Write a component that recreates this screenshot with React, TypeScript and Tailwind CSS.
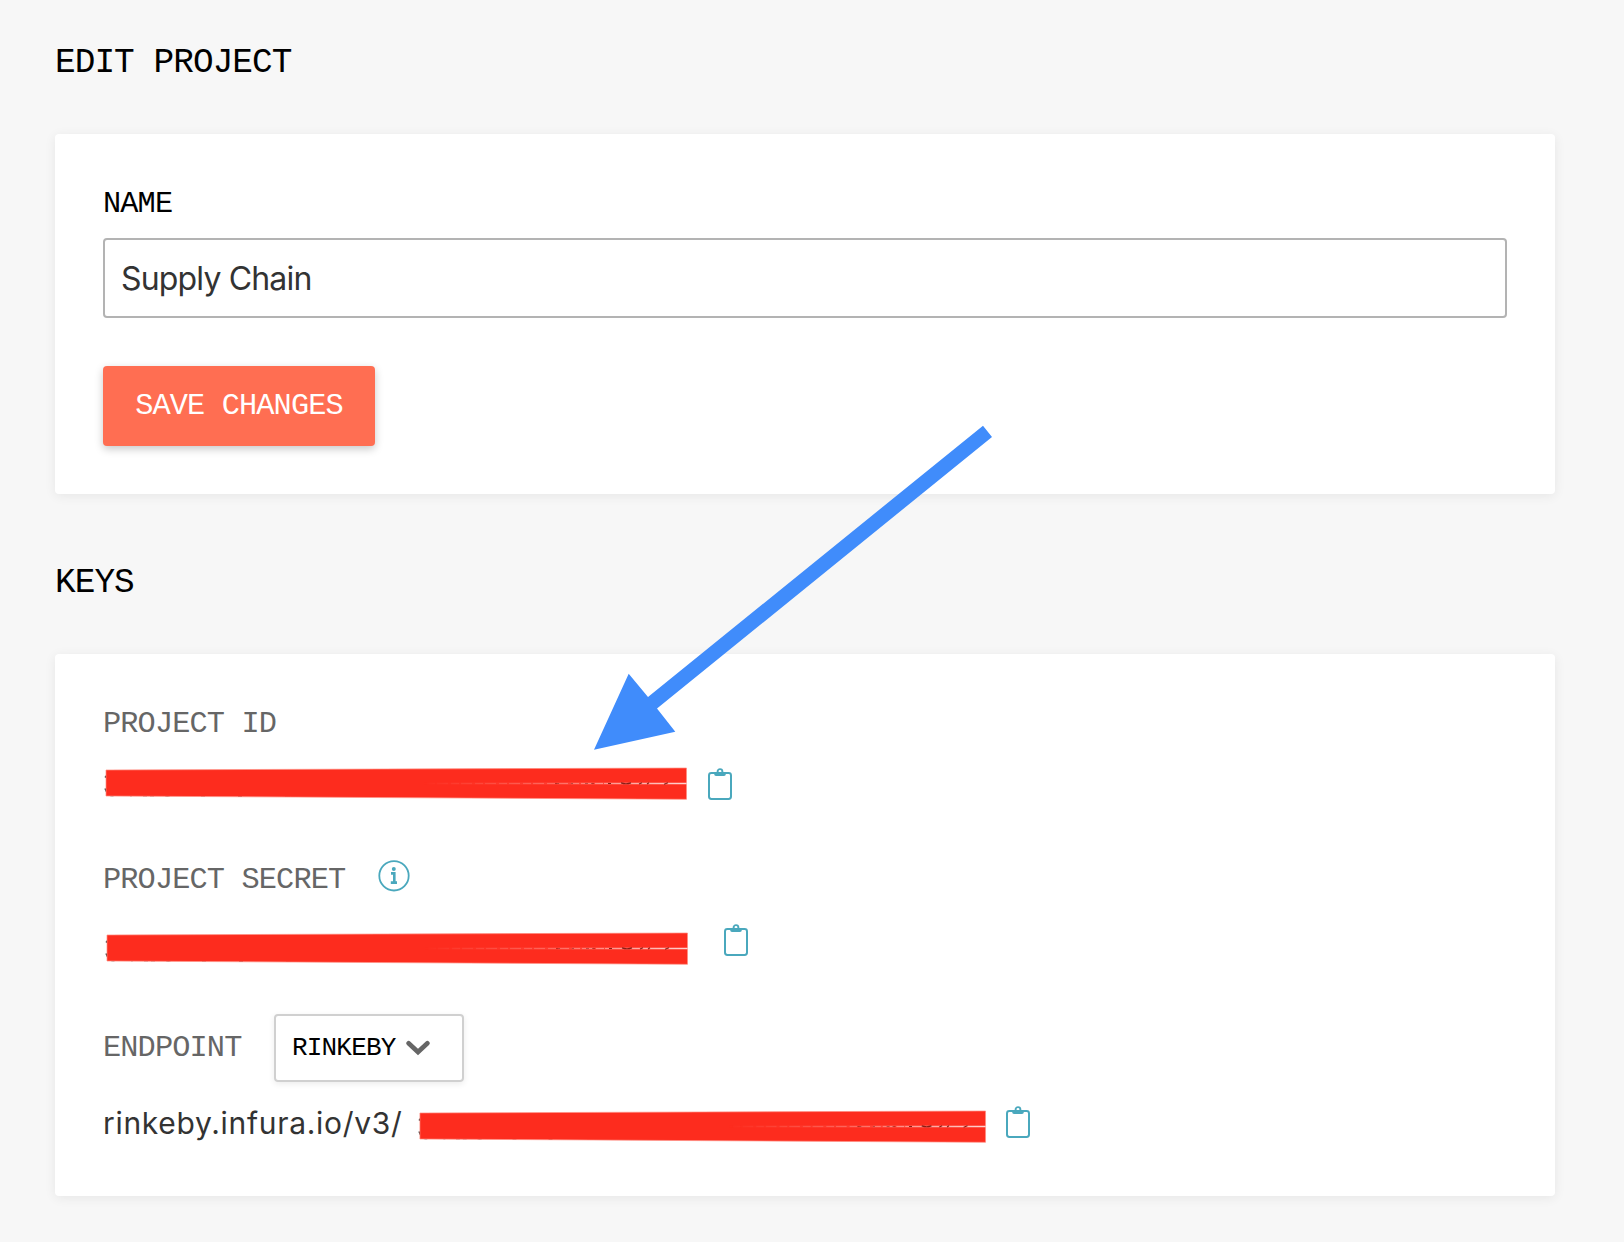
import React from "react";

const MONO = "font-['Liberation_Mono',monospace]";

function ClipboardIcon() {
  return (
    <svg viewBox="0 0 24 32" className="h-8 w-6 shrink-0" fill="none" stroke="#4aa8bd">
      <rect x="1" y="5" width="22" height="26" rx="2.4" strokeWidth="2" />
      <circle cx="12" cy="3.5" r="2.4" strokeWidth="1.9" />
      <path d="M6.2 4.8H9L10.4 6H13.6L15 4.8H17.8V6.3Q17.8 8 16 8H8Q6.2 8 6.2 6.3Z" fill="#4aa8bd" stroke="none" />
    </svg>
  );
}

function InfoIcon() {
  return (
    <svg viewBox="0 0 32 32" className="-mt-0.5 size-8 shrink-0 self-start" fill="none" stroke="#4aa8bd">
      <circle cx="16" cy="15.8" r="14.7" strokeWidth="1.8" />
      <circle cx="15.8" cy="8.9" r="2" fill="#4aa8bd" stroke="none" />
      <path d="M13 13.4H16.3V22.4M12.8 22.6H19" strokeWidth="2.6" />
    </svg>
  );
}

function Redaction({ id, className }: { id: string; className: string }) {
  return (
    <svg viewBox="0 0 584 40" preserveAspectRatio="none" className={`h-10 shrink-0 ${className}`}>
      <defs>
        <linearGradient id={id} gradientUnits="userSpaceOnUse" x1="320" y1="0" x2="583" y2="0">
          <stop offset="0" stopColor="#fff" stopOpacity="0" />
          <stop offset="0.5" stopColor="#fff" stopOpacity="0.3" />
          <stop offset="1" stopColor="#fff" stopOpacity="0.8" />
        </linearGradient>
      </defs>
      <g stroke="#333" strokeWidth="1.3" fill="none">
        <path d="M1 13.5L3 11M1 24.5Q2 28 4 29" />
        <path d="M4 30.8Q7 32.4 11 30.8M24 31Q27 32.4 30 31M39 31.6H43M46 31.6H50M60 31.2Q63 32.4 67 31.2M97 31.8H101M134 32.1H138M181 32.2H186M192 32.2H196" />
      </g>
      <path d="M2 6L582.5 4V35.3L2 32Z" fill="#fd2c1e" stroke="#ff8c80" strokeWidth="0.7" />
      <path d="M320 19.5H582.5" stroke={`url(#${id})`} strokeWidth="1.6" />
      <path d="M320 19.5H500" stroke="#fd2c1e" strokeOpacity="0.7" strokeWidth="1.7" strokeDasharray="3 8 2 11" />
      <path
        d="M451 19.5H455M467 19.5H469M481 19.5H484M487 19.5H490"
        stroke="#8a1e16"
        strokeOpacity="0.55"
        strokeWidth="1.2"
      />
      <path
        d="M504 19.5H507M535 20L538 18.8M543 20L545 18.8M560 20.2L564 18.8M517 18.9Q522 20.6 527 18.9"
        fill="none"
        stroke="#8a1e16"
        strokeWidth="1.2"
      />
    </svg>
  );
}

function Heading({ children }: { children: React.ReactNode }) {
  return (
    <h2 className={`${MONO} text-[34.4px] leading-10 tracking-[-0.93px] text-black`}>{children}</h2>
  );
}

function Label({ children, className }: { children: React.ReactNode; className: string }) {
  return (
    <span className={`${MONO} block text-[30.3px] leading-9 tracking-[-0.87px] whitespace-nowrap ${className}`}>
      {children}
    </span>
  );
}

const CARD = "mt-[51px] rounded-[4px] bg-white px-12 shadow-[0_2px_12px_rgba(0,0,0,0.07)]";

export default function App() {
  return (
    <main className="relative h-[1242px] w-[1624px] overflow-hidden bg-[#f7f7f7] pt-[43px] pr-[69px] pl-[55px]">
      <Heading>EDIT PROJECT</Heading>
      <section className={`${CARD} h-[360px] pt-[52px]`}>
        <Label className="text-black">NAME</Label>
        <div className="mt-4 flex h-20 items-center rounded-[4px] border-2 border-[#b3b3b3] px-4 pt-0.5 font-[Inter,sans-serif] text-[32px] leading-10 tracking-[-0.83px] text-[#333]">
          Supply Chain
        </div>
        <button
          type="button"
          className="mt-12 flex h-20 w-[272px] items-center justify-center rounded-[4px] bg-[#ff6e52] shadow-[0_3px_8px_rgba(0,0,0,0.22)]"
        >
          <Label className="text-white">SAVE CHANGES</Label>
        </button>
      </section>

      <div className="mt-[69px]">
        <Heading>KEYS</Heading>
      </div>
      <section className={`${CARD} h-[542px] pt-[52px]`}>
        <Label className="text-[#666]">PROJECT ID</Label>
        <div className="mt-[22px] flex h-10 items-center">
          <Redaction id="line-id" className="ml-px w-[584px]" />
          <div className="ml-5">
            <ClipboardIcon />
          </div>
        </div>

        <div className="mt-[58px] flex h-9">
          <div className="w-[275px]">
            <Label className="text-[#666]">PROJECT SECRET</Label>
          </div>
          <InfoIcon />
        </div>
        <div className="mt-[26px] flex h-[45px] items-start">
          <Redaction id="line-secret" className="mt-[5px] ml-0.5 w-[584px]" />
          <div className="ml-[35px]">
            <ClipboardIcon />
          </div>
        </div>

        <div className="mt-[45px] flex h-[68px] items-center">
          <div className="w-[171px]">
            <Label className="text-[#666]">ENDPOINT</Label>
          </div>
          <div className="flex h-[68px] w-[190px] items-center rounded-[4px] border-2 border-[#d0d0d0] pl-4 shadow-[0_2px_6px_rgba(0,0,0,0.08)]">
            <span className={`${MONO} w-[114px] text-[26px] leading-8 tracking-[-0.82px] whitespace-nowrap text-black`}>
              RINKEBY
            </span>
            <svg viewBox="0 0 24 16" className="h-4 w-6" fill="none" stroke="#666" strokeWidth="4.6" strokeLinecap="round">
              <path d="M2.6 3.2L12 12L21.4 3.2" />
            </svg>
          </div>
        </div>

        <div className="mt-6 flex h-[42px] items-start">
          <span className="w-[315px] font-[Inter,sans-serif] text-[30px] leading-[34px] tracking-[0.7px] whitespace-nowrap text-[#333]">
            rinkeby.infura.io/v3/
          </span>
          <Redaction id="line-endpoint" className="mt-px w-[569px]" />
          <div className="ml-[19px]">
            <ClipboardIcon />
          </div>
        </div>
      </section>

      <svg viewBox="0 0 400 326" className="pointer-events-none absolute top-[425px] left-[593px] h-[326px] w-[400px]">
        <path d="M1 324.7L35.7 248.7L55 272L390 0.7L399 12L64 283.5L82.3 306.7Z" fill="#408cfb" />
      </svg>
    </main>
  );
}
